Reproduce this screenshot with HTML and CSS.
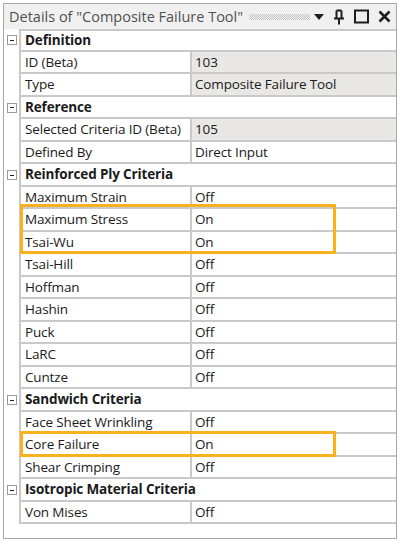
FILE: index.html
```html
<!DOCTYPE html>
<html lang="en">
<head>
    <meta charset="UTF-8">
    <meta name="viewport" content="width=device-width, initial-scale=1.0">
    <title>Details</title>
    <link rel="stylesheet" href="styles.css">
</head>
<body>
    <div class="panel">
        <div class="titlebar">
            <span class="title">Details of "Composite Failure Tool"</span>
            <span class="grip"></span>
            <span class="tools">
                <svg width="10" height="6" viewBox="0 0 10 6"><path d="M0 0 H10 L5 6 Z" fill="#1e1e1e"/></svg>
                <svg width="12" height="16" viewBox="0 0 12 16"><path d="M3.5 1.5 V9.5 M8.5 1.5 V9.5 M3.5 1.5 H8.5 M1 9.5 H11 M6 9.5 V15.5" stroke="#1e1e1e" stroke-width="2" fill="none"/></svg>
                <svg width="15" height="15" viewBox="0 0 15 15"><rect x="1" y="1.5" width="13" height="12" stroke="#1e1e1e" stroke-width="2" fill="none"/></svg>
                <svg width="13" height="13" viewBox="0 0 13 13"><path d="M1.5 1.5 L11.5 11.5 M11.5 1.5 L1.5 11.5" stroke="#1e1e1e" stroke-width="2.6"/></svg>
            </span>
        </div>

        <div class="grid">
            <div class="row head"><span class="gutter"><i class="minus"></i></span><span class="cell">Definition</span></div>
            <div class="row"><span class="gutter"></span><span class="cell">ID (Beta)</span><span class="cell value readonly">103</span></div>
            <div class="row"><span class="gutter"></span><span class="cell">Type</span><span class="cell value readonly">Composite Failure Tool</span></div>

            <div class="row head"><span class="gutter"><i class="minus"></i></span><span class="cell">Reference</span></div>
            <div class="row"><span class="gutter"></span><span class="cell">Selected Criteria ID (Beta)</span><span class="cell value readonly">105</span></div>
            <div class="row"><span class="gutter"></span><span class="cell">Defined By</span><span class="cell value">Direct Input</span></div>

            <div class="row head"><span class="gutter"><i class="minus"></i></span><span class="cell">Reinforced Ply Criteria</span></div>
            <div class="row"><span class="gutter"></span><span class="cell">Maximum Strain</span><span class="cell value">Off</span></div>
            <div class="row"><span class="gutter"></span><span class="cell">Maximum Stress</span><span class="cell value">On</span></div>
            <div class="row"><span class="gutter"></span><span class="cell">Tsai-Wu</span><span class="cell value">On</span></div>
            <div class="row"><span class="gutter"></span><span class="cell">Tsai-Hill</span><span class="cell value">Off</span></div>
            <div class="row"><span class="gutter"></span><span class="cell">Hoffman</span><span class="cell value">Off</span></div>
            <div class="row"><span class="gutter"></span><span class="cell">Hashin</span><span class="cell value">Off</span></div>
            <div class="row"><span class="gutter"></span><span class="cell">Puck</span><span class="cell value">Off</span></div>
            <div class="row"><span class="gutter"></span><span class="cell">LaRC</span><span class="cell value">Off</span></div>
            <div class="row"><span class="gutter"></span><span class="cell">Cuntze</span><span class="cell value">Off</span></div>

            <div class="row head"><span class="gutter"><i class="minus"></i></span><span class="cell">Sandwich Criteria</span></div>
            <div class="row"><span class="gutter"></span><span class="cell">Face Sheet Wrinkling</span><span class="cell value">Off</span></div>
            <div class="row"><span class="gutter"></span><span class="cell">Core Failure</span><span class="cell value">On</span></div>
            <div class="row"><span class="gutter"></span><span class="cell">Shear Crimping</span><span class="cell value">Off</span></div>

            <div class="row head"><span class="gutter"><i class="minus"></i></span><span class="cell">Isotropic Material Criteria</span></div>
            <div class="row"><span class="gutter"></span><span class="cell">Von Mises</span><span class="cell value">Off</span></div>

            <!-- highlight boxes drawn over the rows -->
            <div class="mark mark-stress"></div>
            <div class="mark mark-core"></div>
        </div>
    </div>
</body>
</html>
```

FILE: styles.css
```css
body {
    margin: 0;
    background-color: #ffffff;
    font-family: "Open Sans", "Noto Sans", sans-serif;
    color: #1a1a1a;
}

.panel {
    margin: 3px 0 0 3px;
    width: 392px;
    height: 534px;
    border: 1px solid #a8a8a8;
    background-color: #ffffff;
}

.titlebar {
    height: 25px;
    display: flex;
    align-items: center;
    padding-left: 5px;
    background-color: #f0f0f0;
}

.title {
    font-size: 14.5px;
    color: #505050;
    white-space: nowrap;
}

.grip {
    flex: 1;
    height: 6px;
    margin: 0 4px 0 6px;
    background-image: conic-gradient(#c4c4c4 25%, transparent 0 50%, #c4c4c4 0 75%, transparent 0);
    background-size: 2px 2px;
}

.tools {
    display: flex;
    align-items: center;
    gap: 9px;
    padding-right: 5px;
}

.grid {
    position: relative;
    font-size: 13.5px;
}

.row {
    display: grid;
    grid-template-columns: 15px 171px 1fr;
    height: 22.5px;
}

.gutter {
    display: flex;
    align-items: center;
    justify-content: center;
}

.minus {
    width: 8px;
    height: 8px;
    border: 1px solid #9a9a9a;
    position: relative;
    margin-left: 1px;
}

.minus::after {
    content: "";
    position: absolute;
    left: 2px;
    top: 3.5px;
    width: 4px;
    height: 1px;
    background-color: #1e1e1e;
}

.cell {
    display: flex;
    align-items: center;
    padding-left: 4px;
    border-bottom: 2px solid #c9c9c9;
    border-left: 2px solid #c9c9c9;
    box-sizing: border-box;
    white-space: nowrap;
    letter-spacing: -0.15px;
}

.row:first-child .cell {
    border-top: 2px solid #c9c9c9;
    height: 22.5px;
}

.value {
    padding-left: 3px;
}

.readonly {
    background-color: #e9e8e5;
}

.head .cell {
    grid-column: 2 / 4;
    font-weight: bold;
}

.mark {
    position: absolute;
    left: 16px;
    width: 316px;
    border: 3px solid #fbb01e;
    box-sizing: border-box;
}

.mark-stress {
    top: 175px;
    height: 50px;
}

.mark-core {
    top: 402px;
    height: 26px;
}
```
